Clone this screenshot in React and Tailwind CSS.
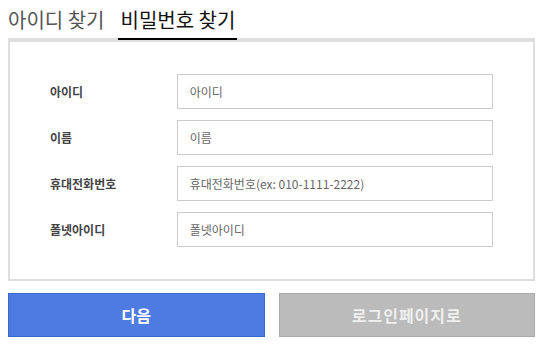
export default function App() {
  const rows = [
    { label: "아이디", ph: "아이디" },
    { label: "이름", ph: "이름" },
    { label: "휴대전화번호", ph: "휴대전화번호(ex: 010-1111-2222)" },
    { label: "폴넷아이디", ph: "폴넷아이디" },
  ];
  return (
    <div
      className="w-[543px] h-[352px] bg-white px-2"
      style={{ fontFamily: '"Noto Sans CJK KR", "Noto Sans", sans-serif' }}
    >
      <div className="flex items-center h-[38px] gap-[14px] pt-[2px]">
        <div className="text-[20px] text-[#555] leading-none">아이디 찾기</div>
        <div className="relative h-full flex items-center px-[2px]">
          <span className="text-[20px] text-[#111] leading-none">비밀번호 찾기</span>
          <span className="absolute left-0 right-0 bottom-[-2px] h-[2px] bg-black z-10" />
        </div>
      </div>
      <div className="border-t-4 border-x-2 border-b-2 border-[#dedede] pt-[32px] pb-[32px] pl-10 pr-10 flex flex-col gap-[11px]">
        {rows.map((r) => (
          <div key={r.label} className="flex items-center">
            <div className="w-[127px] text-[12px] font-bold text-[#444]">{r.label}</div>
            <div className="w-[317px] h-[35px] border border-[#ccc] flex items-center pl-[12px] text-[12px] text-[#666]">
              {r.ph}
            </div>
          </div>
        ))}
      </div>
      <div className="flex gap-[14px] mt-[12px]">
        <div className="flex-1 h-[44px] bg-[#4d7be2] border border-[#3b69cf] flex items-center justify-center text-white text-[16px] font-semibold">
          다음
        </div>
        <div className="flex-1 h-[44px] bg-[#bbbbbb] border border-[#aaaaaa] flex items-center justify-center text-[#eeeeee] text-[16px] font-semibold tracking-[1px]">
          로그인페이지로
        </div>
      </div>
    </div>
  );
}
